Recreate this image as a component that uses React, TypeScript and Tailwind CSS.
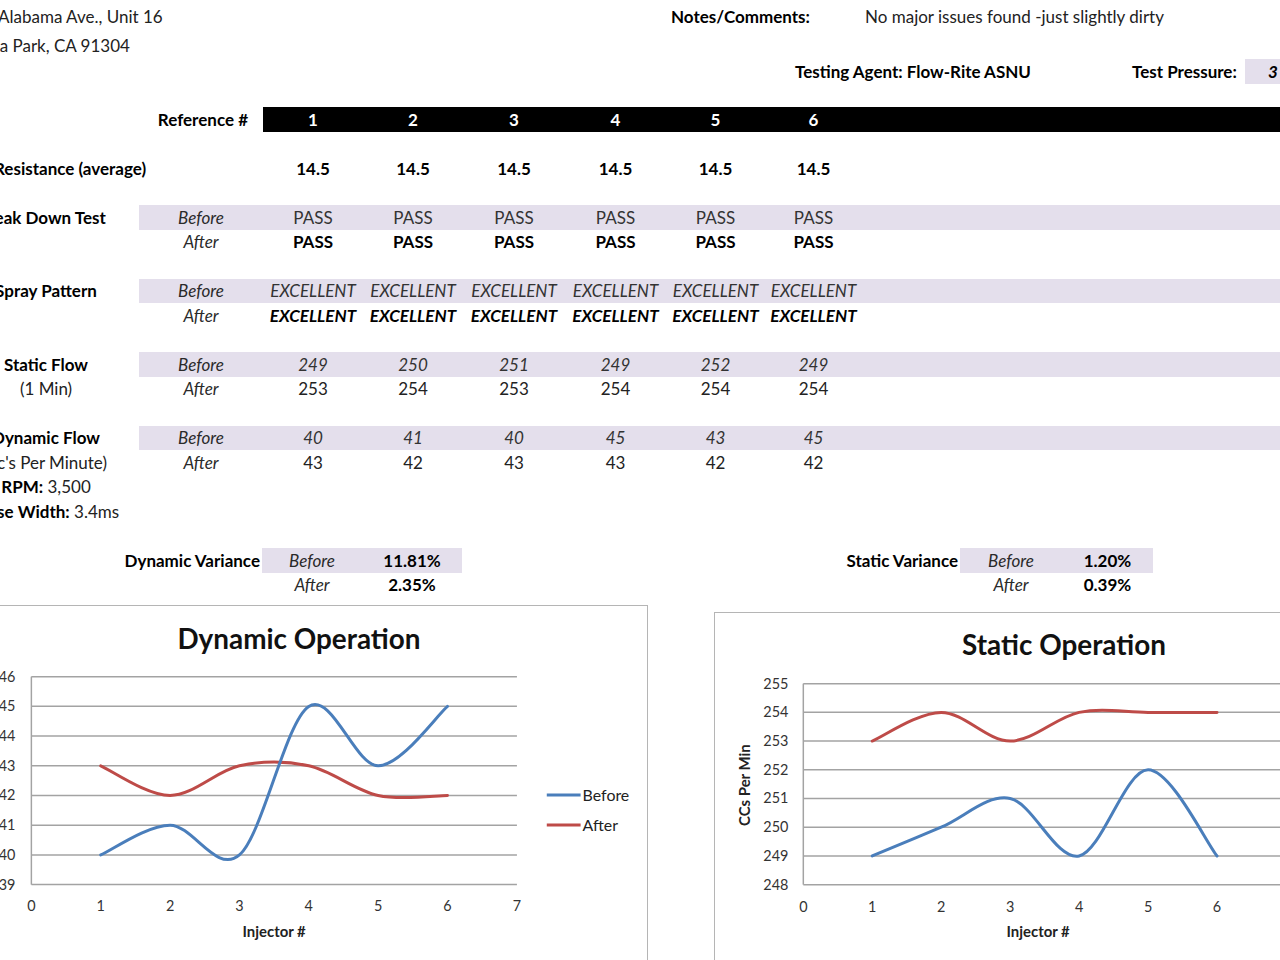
import React from "react";

const W = ["w-[100px]", "w-[100px]", "w-[102px]", "w-[101px]", "w-[99px]", "w-[97px]"];

type Pt = [number, number];

function smooth(pts: Pt[]): string {
  let d = `M${pts[0][0].toFixed(1)},${pts[0][1].toFixed(1)}`;
  for (let i = 0; i < pts.length - 1; i++) {
    const p0 = pts[i - 1] || pts[i];
    const p1 = pts[i];
    const p2 = pts[i + 1];
    const p3 = pts[i + 2] || p2;
    const c1x = p1[0] + (p2[0] - p0[0]) / 6;
    const c1y = p1[1] + (p2[1] - p0[1]) / 6;
    const c2x = p2[0] - (p3[0] - p1[0]) / 6;
    const c2y = p2[1] - (p3[1] - p1[1]) / 6;
    d += ` C${c1x.toFixed(1)},${c1y.toFixed(1)} ${c2x.toFixed(1)},${c2y.toFixed(1)} ${p2[0].toFixed(1)},${p2[1].toFixed(1)}`;
  }
  return d;
}

const FONT = "Lato, 'Open Sans', sans-serif";
const BLUE = "#4a7ebb";
const RED = "#be4b48";
const GRID = "#a3a3a3";

function DynamicChart() {
  const x0 = 70;
  const xs = 69.7;
  const y0 = 71;
  const ys = 29.86;
  const X = (i: number) => x0 + i * xs;
  const Y = (v: number) => y0 + (46 - v) * ys;
  const before = [40, 41, 40, 45, 43, 45];
  const after = [43, 42, 43, 43, 42, 42];
  const vals = [46, 45, 44, 43, 42, 41, 40, 39];
  return (
    <svg viewBox="0 0 688 400" className="block w-full h-full" fontFamily={FONT}>
      <text x={339} y={43} textAnchor="middle" fontSize={28} fontWeight={700} fill="#111">
        Dynamic Operation
      </text>
      {vals.map((v) => (
        <g key={v}>
          <line x1={x0} x2={558} y1={Y(v)} y2={Y(v)} stroke={GRID} strokeWidth={1.5} />
          <text x={54} y={Y(v) + 5} textAnchor="end" fontSize={14.5} fill="#333">
            {v}
          </text>
        </g>
      ))}
      <line x1={x0} x2={x0} y1={Y(46)} y2={Y(39)} stroke={GRID} strokeWidth={1.5} />
      {[0, 1, 2, 3, 4, 5, 6, 7].map((i) => (
        <text key={i} x={X(i)} y={307} textAnchor="middle" fontSize={14.5} fill="#333">
          {i}
        </text>
      ))}
      <text x={314} y={333} textAnchor="middle" fontSize={15} fontWeight={700} fill="#222">
        Injector #
      </text>
      <path d={smooth(after.map((v, i) => [X(i + 1), Y(v)] as Pt))} fill="none" stroke={RED} strokeWidth={3} strokeLinecap="round" />
      <path d={smooth(before.map((v, i) => [X(i + 1), Y(v)] as Pt))} fill="none" stroke={BLUE} strokeWidth={3} strokeLinecap="round" />
      <line x1={588} x2={622} y1={190} y2={190} stroke={BLUE} strokeWidth={3} />
      <text x={624} y={196} fontSize={16} fill="#222">Before</text>
      <line x1={588} x2={622} y1={220} y2={220} stroke={RED} strokeWidth={3} />
      <text x={624} y={226} fontSize={16} fill="#222">After</text>
    </svg>
  );
}

function StaticChart() {
  const x0 = 88;
  const xs = 69.3;
  const y0 = 71;
  const ys = 28.86;
  const X = (i: number) => x0 + i * xs;
  const Y = (v: number) => y0 + (255 - v) * ys;
  const before = [249, 250, 251, 249, 252, 249];
  const after = [253, 254, 253, 254, 254, 254];
  const vals = [255, 254, 253, 252, 251, 250, 249, 248];
  return (
    <svg viewBox="0 0 700 400" className="block w-full h-full" fontFamily={FONT}>
      <text x={350} y={42} textAnchor="middle" fontSize={28} fontWeight={700} fill="#111">
        Static Operation
      </text>
      {vals.map((v) => (
        <g key={v}>
          <line x1={x0} x2={700} y1={Y(v)} y2={Y(v)} stroke={GRID} strokeWidth={1.5} />
          <text x={73} y={Y(v) + 5} textAnchor="end" fontSize={14.5} fill="#333">
            {v}
          </text>
        </g>
      ))}
      <line x1={x0} x2={x0} y1={Y(255)} y2={Y(248)} stroke={GRID} strokeWidth={1.5} />
      {[0, 1, 2, 3, 4, 5, 6, 7].map((i) => (
        <text key={i} x={X(i)} y={300} textAnchor="middle" fontSize={14.5} fill="#333">
          {i}
        </text>
      ))}
      <text x={324} y={326} textAnchor="middle" fontSize={15} fontWeight={700} fill="#222">
        Injector #
      </text>
      <text
        x={31}
        y={173}
        textAnchor="middle"
        fontSize={15}
        fontWeight={700}
        fill="#222"
        transform="rotate(-90 31 173)"
        dominantBaseline="middle"
      >
        CCs Per Min
      </text>
      <path d={smooth(after.map((v, i) => [X(i + 1), Y(v)] as Pt))} fill="none" stroke={RED} strokeWidth={3} strokeLinecap="round" />
      <path d={smooth(before.map((v, i) => [X(i + 1), Y(v)] as Pt))} fill="none" stroke={BLUE} strokeWidth={3} strokeLinecap="round" />
    </svg>
  );
}

function DataRow({
  label,
  side,
  vals,
  band,
  valClass,
}: {
  label?: React.ReactNode;
  side?: string;
  vals?: string[];
  band?: boolean;
  valClass?: string;
}) {
  return (
    <div className="flex h-[24.5px] items-center">
      <div className="w-[179px] shrink-0 pr-[7px] text-center whitespace-nowrap">{label}</div>
      <div className={`flex flex-1 h-full items-center ${band ? "bg-[#e4dfec]" : ""}`}>
        <div className="w-[124px] shrink-0 text-center italic text-[#2a2a2a]">{side}</div>
        {vals &&
          vals.map((v, i) => (
            <div key={i} className={`${W[i]} shrink-0 text-center whitespace-nowrap ${valClass || ""}`}>
              {v}
            </div>
          ))}
      </div>
    </div>
  );
}

function Spacer() {
  return <div className="h-[24.5px]" />;
}

export default function App() {
  return (
    <div className="w-[1280px] h-[960px] overflow-hidden bg-white text-[17px] text-[#222] font-[Lato,'Open_Sans',sans-serif] leading-none">
      <div className="w-[1320px] ml-[-40px]">
        {/* header */}
        <div className="flex h-[33px] items-center whitespace-nowrap">
          <div className="w-[711px] shrink-0 pl-[38px]">Alabama Ave., Unit 16</div>
          <div className="w-[194px] shrink-0 font-bold text-black">Notes/Comments:</div>
          <div>No major issues found -just slightly dirty</div>
        </div>
        <div className="flex h-[25.5px] items-center whitespace-nowrap">
          <div className="ml-[-8px]">Canoga Park, CA 91304</div>
        </div>
        <div className="flex h-[25px] items-stretch whitespace-nowrap">
          <div className="w-[835px] shrink-0" />
          <div className="w-[337px] shrink-0 flex items-center font-bold text-black">Testing Agent: Flow-Rite ASNU</div>
          <div className="w-[113px] shrink-0 flex items-center font-bold text-black">Test Pressure:</div>
          <div className="flex-1 flex items-center bg-[#e4dfec] pl-[23px] font-bold italic text-black">3</div>
        </div>
        <div className="h-[23.5px]" />

        {/* reference row */}
        <div className="flex h-[24.5px] items-center">
          <div className="w-[179px] shrink-0" />
          <div className="w-[124px] shrink-0 text-right pr-[15px] font-bold text-black whitespace-nowrap">Reference #</div>
          <div className="flex flex-1 h-full items-center bg-black text-white font-bold">
            {["1", "2", "3", "4", "5", "6"].map((v, i) => (
              <div key={i} className={`${W[i]} shrink-0 text-center`}>
                {v}
              </div>
            ))}
          </div>
        </div>
        <Spacer />

        {/* resistance */}
        <div className="flex h-[24.5px] items-center">
          <div className="w-[179px] shrink-0 pl-[34px] font-bold text-black whitespace-nowrap overflow-visible">
            Resistance (average)
          </div>
          <div className="w-[124px] shrink-0" />
          {["14.5", "14.5", "14.5", "14.5", "14.5", "14.5"].map((v, i) => (
            <div key={i} className={`${W[i]} shrink-0 text-center font-bold text-black`}>
              {v}
            </div>
          ))}
        </div>
        <Spacer />

        <DataRow
          label={<span className="font-bold text-black">Leak Down Test</span>}
          side="Before"
          band
          vals={["PASS", "PASS", "PASS", "PASS", "PASS", "PASS"]}
          valClass="text-[#333]"
        />
        <DataRow side="After" vals={["PASS", "PASS", "PASS", "PASS", "PASS", "PASS"]} valClass="font-bold text-black" />
        <Spacer />

        <DataRow
          label={<span className="font-bold text-black">Spray Pattern</span>}
          side="Before"
          band
          vals={["EXCELLENT", "EXCELLENT", "EXCELLENT", "EXCELLENT", "EXCELLENT", "EXCELLENT"]}
          valClass="italic text-[#333]"
        />
        <DataRow
          side="After"
          vals={["EXCELLENT", "EXCELLENT", "EXCELLENT", "EXCELLENT", "EXCELLENT", "EXCELLENT"]}
          valClass="italic font-bold text-black"
        />
        <Spacer />

        <DataRow
          label={<span className="font-bold text-black">Static Flow</span>}
          side="Before"
          band
          vals={["249", "250", "251", "249", "252", "249"]}
          valClass="italic text-[#333]"
        />
        <DataRow label="(1 Min)" side="After" vals={["253", "254", "253", "254", "254", "254"]} />
        <Spacer />

        <DataRow
          label={<span className="font-bold text-black">Dynamic Flow</span>}
          side="Before"
          band
          vals={["40", "41", "40", "45", "43", "45"]}
          valClass="italic text-[#333]"
        />
        <DataRow label="(cc's Per Minute)" side="After" vals={["43", "42", "43", "43", "42", "42"]} />
        <DataRow
          label={
            <span>
              <span className="font-bold text-black">RPM:</span> 3,500
            </span>
          }
        />
        <DataRow
          label={
            <span>
              <span className="font-bold text-black">Pulse Width:</span> 3.4ms
            </span>
          }
        />
        <Spacer />

        {/* variance rows */}
        <div className="flex h-[24.5px] items-center whitespace-nowrap">
          <div className="w-[302px] shrink-0 text-right pr-[2px] font-bold text-black">Dynamic Variance</div>
          <div className="w-[200px] shrink-0 h-full flex items-center bg-[#e4dfec]">
            <div className="w-[100px] text-center italic text-[#2a2a2a]">Before</div>
            <div className="w-[100px] text-center font-bold text-black">11.81%</div>
          </div>
          <div className="w-[498px] shrink-0 text-right pr-[2px] font-bold text-black">Static Variance</div>
          <div className="w-[193px] shrink-0 h-full flex items-center bg-[#e4dfec]">
            <div className="w-[102px] text-center italic text-[#2a2a2a]">Before</div>
            <div className="w-[91px] text-center font-bold text-black">1.20%</div>
          </div>
        </div>
        <div className="flex h-[24.5px] items-center whitespace-nowrap">
          <div className="w-[302px] shrink-0" />
          <div className="w-[200px] shrink-0 flex items-center">
            <div className="w-[100px] text-center italic text-[#2a2a2a]">After</div>
            <div className="w-[100px] text-center font-bold text-black">2.35%</div>
          </div>
          <div className="w-[498px] shrink-0" />
          <div className="w-[193px] shrink-0 flex items-center">
            <div className="w-[102px] text-center italic text-[#2a2a2a]">After</div>
            <div className="w-[91px] text-center font-bold text-black">0.39%</div>
          </div>
        </div>

        {/* charts */}
        <div className="flex items-start">
          <div className="mt-[8px] w-[688px] h-[400px] shrink-0 border-[1.5px] border-[#b5b5b5] bg-white">
            <DynamicChart />
          </div>
          <div className="mt-[15px] ml-[66px] w-[700px] h-[400px] shrink-0 border-[1.5px] border-[#b5b5b5] bg-white">
            <StaticChart />
          </div>
        </div>
      </div>
    </div>
  );
}
